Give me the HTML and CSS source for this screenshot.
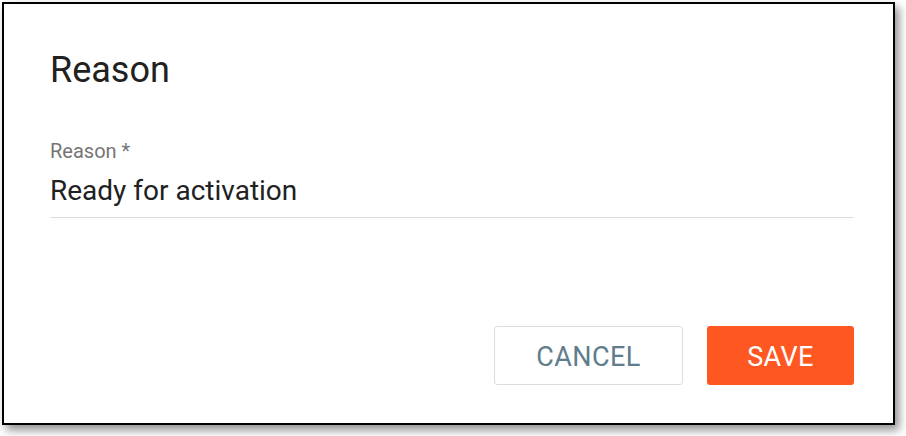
FILE: index.html
```html
<!DOCTYPE html>
<html>
  <head>
    <title>Reason</title>
    <link rel="stylesheet" href="styles.css">
  </head>
  <body>
    <div class="dialog">
      <h2 class="dialog-title">Reason</h2>
      <div class="field">
        <label class="field-label" for="reason">Reason *</label>
        <div class="field-input" id="reason">Ready for activation</div>
      </div>
      <div class="actions">
        <button class="btn btn-cancel">CANCEL</button>
        <button class="btn btn-save">SAVE</button>
      </div>
    </div>
  </body>
</html>
```

FILE: styles.css
```css
/* Page */
body {
  margin: 0;
  background: #fff;
  font-family: Roboto, "Liberation Sans", sans-serif;
  min-height: 436px;
}

/* The dialog box with its black frame */
.dialog {
  box-sizing: border-box;
  width: 893px;
  height: 423px;
  margin: 2px;
  border: 2px solid #000;
  background: #fff;
  box-shadow: 4px 5px 9px rgba(0, 0, 0, 0.45);
  padding: 0 39px 38px 46px;
  display: flex;
  flex-direction: column;
}

/* Title */
.dialog-title {
  margin: 45px 0 0 0;
  font-size: 36px;
  font-weight: 400;
  line-height: 43px;
  color: #212121;
}

/* Text field */
.field {
  margin-top: 47px;
}

.field-label {
  display: block;
  font-size: 20px;
  line-height: 24px;
  color: #757575;
}

.field-input {
  margin-top: 12px;
  font-size: 28px;
  line-height: 32px;
  color: #212121;
  padding-bottom: 10px;
  border-bottom: 1px solid #dcdcdc;
}

/* Buttons */
.actions {
  margin-top: auto;
  display: flex;
  justify-content: flex-end;
  gap: 24px;
}

.btn {
  height: 59px;
  padding-top: 3px;
  border-radius: 3px;
  font-family: Roboto, "Liberation Sans", sans-serif;
  font-size: 27px;
  letter-spacing: 0.4px;
  cursor: pointer;
}

.btn-cancel {
  width: 189px;
  background: #fff;
  border: 1px solid #dddddd;
  color: #607d8b;
}

.btn-save {
  width: 147px;
  background: #ff5722;
  border: none;
  color: #fff;
}
```
